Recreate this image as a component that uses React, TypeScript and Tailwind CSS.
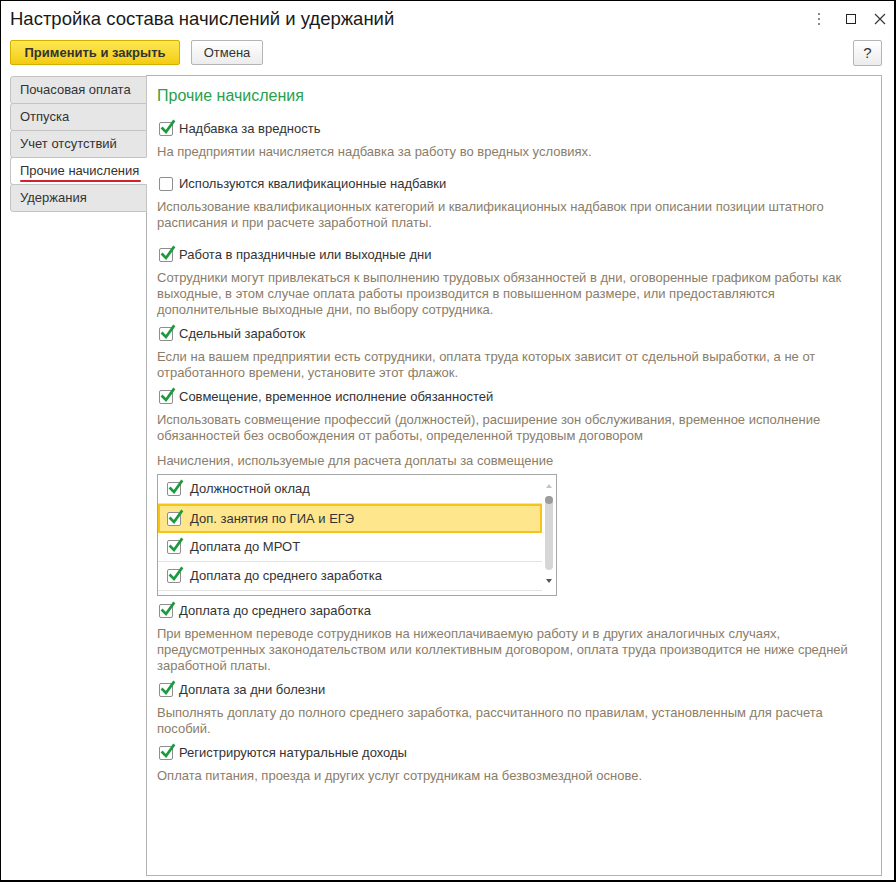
import React from "react";

const font = { fontFamily: '"Liberation Sans", Arial, sans-serif' };

function Check({ checked }: { checked: boolean }) {
  return (
    <span className="relative block w-[14px] h-[14px] shrink-0 rounded-[2px] border border-[#8e8e8e] bg-white">
      {checked && (
        <svg className="absolute left-[-1px] top-[-4px]" width="18" height="18" viewBox="0 0 18 18">
          <path d="M3.5 9.5 L7 13 L14.5 2.5" stroke="#1b9b3e" strokeWidth="2.7" fill="none" strokeLinecap="square" />
        </svg>
      )}
    </span>
  );
}

function Option({ label, checked, lines, mt }: { label: string; checked: boolean; lines: string[]; mt: string }) {
  return (
    <div className={mt}>
      <div className="flex h-[20px] items-center gap-[6px] pl-[2px]">
        <Check checked={checked} />
        <span className="text-[13px] text-[#333]">{label}</span>
      </div>
      <div className="mt-[5px] text-[13px] leading-[16px] text-[#8a7d69] whitespace-nowrap">
        {lines.map((l) => (
          <div key={l}>{l}</div>
        ))}
      </div>
    </div>
  );
}

const tabs = ["Почасовая оплата", "Отпуска", "Учет отсутствий", "Прочие начисления", "Удержания"];

const listRows = ["Должностной оклад", "Доп. занятия по ГИА и ЕГЭ", "Доплата до МРОТ", "Доплата до среднего заработка"];

export default function App() {
  return (
    <div
      style={font}
      className="flex h-[882px] w-[896px] flex-col border-t border-l border-r-2 border-b-2 border-black bg-white"
    >
      {/* Title */}
      <div className="flex h-[36px] items-center pl-[9px] pr-[8px]">
        <div className="flex-1 text-[18.5px] text-[#1a1a1a]">Настройка состава начислений и удержаний</div>
        <div className="flex items-center">
          <svg width="6" height="14" viewBox="0 0 6 14" className="mr-[24px]">
            <rect x="2" y="1" width="2" height="2" fill="#8a8a8a" />
            <rect x="2" y="6" width="2" height="2" fill="#8a8a8a" />
            <rect x="2" y="11" width="2" height="2" fill="#8a8a8a" />
          </svg>
          <span className="mr-[18px] block h-[10px] w-[10px] border border-[#222]" />
          <svg width="12" height="12" viewBox="0 0 12 12">
            <path d="M1 1 L11 11 M11 1 L1 11" stroke="#333" strokeWidth="1.1" />
          </svg>
        </div>
      </div>

      {/* Toolbar */}
      <div className="mt-[3px] flex h-[26px] items-start pl-[9px] pr-[12px]">
        <button className="h-[25px] w-[170px] rounded-[2px] border border-[#d4b000] bg-gradient-to-b from-[#fde84e] to-[#f3cc0a] text-[13px] font-bold text-[#333]">
          Применить и закрыть
        </button>
        <button className="ml-[11px] h-[25px] w-[72px] rounded-[2px] border border-[#b4b4b4] bg-gradient-to-b from-white to-[#ececec] text-[13px] text-[#333]">
          Отмена
        </button>
        <div className="flex-1" />
        <button className="h-[26px] w-[29px] rounded-[2px] border border-[#b4b4b4] bg-gradient-to-b from-white to-[#ececec] text-[15px] text-[#333]">
          ?
        </button>
      </div>

      {/* Main */}
      <div className="mt-[9px] flex pl-[9px] pr-[12px]">
        <div className="relative z-10 -mr-px w-[137px] pt-px">
          {tabs.map((t, i) => {
            const active = i === 3;
            return (
              <div
                key={t}
                className={
                  "relative flex h-[28px] items-center rounded-l-[3px] border pl-[9px] text-[13px] text-[#333] " +
                  (i > 0 ? "-mt-px " : "") +
                  (active ? "border-[#c4c4c4] border-r-white bg-white" : "border-[#c4c4c4] bg-[#e6e6e6]")
                }
              >
                <span className="relative">
                  {t}
                  {active && (
                    <span className="absolute left-0 right-[-2px] top-[19px] h-[2px] rounded-full bg-[#d1212c]" />
                  )}
                </span>
              </div>
            );
          })}
        </div>

        <div className="h-[801px] flex-1 border border-[#b2b2b2] pl-[10px] pt-[10px]">
          <div className="text-[16px] leading-[20px] text-[#2a9f4d]">Прочие начисления</div>

          <Option
            mt="mt-[13px]"
            checked
            label="Надбавка за вредность"
            lines={["На предприятии начисляется надбавка за работу во вредных условиях."]}
          />
          <Option
            mt="mt-[14px]"
            checked={false}
            label="Используются квалификационные надбавки"
            lines={[
              "Использование квалификационных категорий и квалификационных надбавок при описании позиции штатного",
              "расписания и при расчете заработной платы.",
            ]}
          />
          <Option
            mt="mt-[14px]"
            checked
            label="Работа в праздничные или выходные дни"
            lines={[
              "Сотрудники могут привлекаться к выполнению трудовых обязанностей в дни, оговоренные графиком работы как",
              "выходные, в этом случае оплата работы производится в повышенном размере, или предоставляются",
              "дополнительные выходные дни, по выбору сотрудника.",
            ]}
          />
          <Option
            mt="mt-[6px]"
            checked
            label="Сдельный заработок"
            lines={[
              "Если на вашем предприятии есть сотрудники, оплата труда которых зависит от сдельной выработки, а не от",
              "отработанного времени, установите этот флажок.",
            ]}
          />
          <Option
            mt="mt-[6px]"
            checked
            label="Совмещение, временное исполнение обязанностей"
            lines={[
              "Использовать совмещение профессий (должностей), расширение зон обслуживания, временное исполнение",
              "обязанностей без освобождения от работы, определенной трудовым договором",
            ]}
          />

          <div className="mt-[9px] text-[13px] leading-[16px] text-[#8a7d69]">
            Начисления, используемые для расчета доплаты за совмещение
          </div>

          <div className="mt-[5px] flex h-[122px] w-[400px] border border-[#a6a6a6]">
            <div className="w-[384px]">
              {listRows.map((r, i) => {
                const sel = i === 1;
                return (
                  <div
                    key={r}
                    className={
                      "flex h-[29px] items-center gap-[9px] " +
                      (sel
                        ? "border-2 border-[#f5c415] bg-[#fde68c] pl-[7px]"
                        : "border-b border-[#e2e2e2] pl-[9px]")
                    }
                  >
                    <Check checked />
                    <span className="text-[13px] text-[#333]">{r}</span>
                  </div>
                );
              })}
            </div>
            <div className="flex flex-1 flex-col items-center pt-[9px]">
              <svg width="6" height="4" viewBox="0 0 6 4">
                <path d="M0 4 L3 0 L6 4 Z" fill="#c4c4c4" />
              </svg>
              <div className="relative mt-[8px] h-[74px] w-[8px] rounded-full bg-[#d6d6d6]">
                <div className="absolute left-0 top-0 h-[8px] w-[8px] rounded-full bg-[#9c9c9c]" />
              </div>
              <svg width="6" height="4" viewBox="0 0 6 4" className="mt-[9px]">
                <path d="M0 0 L6 0 L3 4 Z" fill="#555" />
              </svg>
            </div>
          </div>

          <Option
            mt="mt-[5px]"
            checked
            label="Доплата до среднего заработка"
            lines={[
              "При временном переводе сотрудников на нижеоплачиваемую работу и в других аналогичных случаях,",
              "предусмотренных законодательством или коллективным договором, оплата труда производится не ниже средней",
              "заработной платы.",
            ]}
          />
          <Option
            mt="mt-[6px]"
            checked
            label="Доплата за дни болезни"
            lines={[
              "Выполнять доплату до полного среднего заработка, рассчитанного по правилам, установленным для расчета",
              "пособий.",
            ]}
          />
          <Option
            mt="mt-[6px]"
            checked
            label="Регистрируются натуральные доходы"
            lines={["Оплата питания, проезда и других услуг сотрудникам на безвозмездной основе."]}
          />
        </div>
      </div>
    </div>
  );
}
